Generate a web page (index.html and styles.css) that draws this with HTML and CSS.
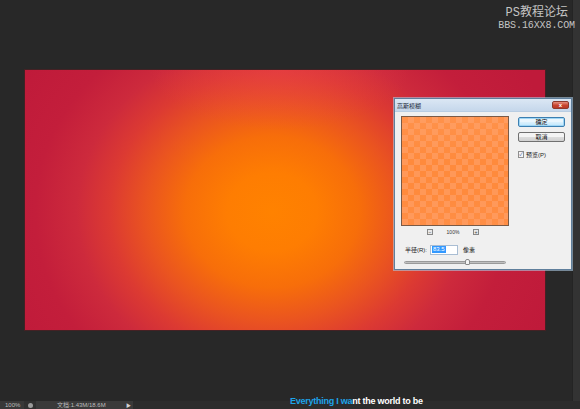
FILE: index.html
```html
<!DOCTYPE html>
<html lang="zh">
<head>
<meta charset="utf-8">
<title>高斯模糊</title>
<link rel="stylesheet" href="styles.css">
</head>
<body>
<div class="app">
  <div class="workspace">
    <div class="doc-area">
      <div class="canvas"></div>
    </div>
    <div class="side-strip"></div>
  </div>
  <div class="statusbar">
    <span class="seg zoom-pct">100%</span>
    <span class="seg seg-icon"><span class="disc"></span></span>
    <span class="seg doc-info">文档:1.43M/18.6M</span>
    <span class="seg seg-arrow">&#9654;</span>
  </div>

  <div class="watermark">
    <div class="wm-line1">PS教程论坛</div>
    <div class="wm-line2">BBS.16XX8.COM</div>
  </div>

  <div class="dialog">
    <div class="titlebar">
      <span class="title">高斯模糊</span>
      <span class="close">x</span>
    </div>
    <div class="dlg-body">
      <div class="left-col">
        <div class="preview"></div>
        <div class="zoom-row">
          <span class="zbtn">−</span>
          <span class="zpct">100%</span>
          <span class="zbtn">+</span>
        </div>
        <div class="radius-row">
          <span class="lbl">半径(R):</span>
          <span class="input"><span class="sel">83.5</span></span>
          <span class="lbl">像素</span>
        </div>
        <div class="slider">
          <span class="thumb"></span>
        </div>
      </div>
      <div class="right-col">
        <div class="btn btn-default">确定</div>
        <div class="btn">取消</div>
        <div class="check-row">
          <span class="checkbox">✓</span>
          <span class="lbl">预览(P)</span>
        </div>
      </div>
    </div>
  </div>

  <div class="lyric"><span class="sung">Everything I wa</span>nt the world to be</div>
</div>
</body>
</html>
```
FILE: styles.css
```css
* { box-sizing: border-box; }
html, body { margin: 0; padding: 0; }
body {
  background: #282828;
  font-family: "Liberation Sans", "Noto Sans CJK SC", sans-serif;
}
.app {
  position: relative;
  width: 580px;
  height: 409px;
  overflow: hidden;
  display: flex;
  flex-direction: column;
  background: #282828;
}
.workspace {
  height: 401px;
  display: flex;
}
.doc-area {
  width: 572px;
  padding: 70px 0 0 25px;
}
.canvas {
  width: 520px;
  height: 260px;
  background:
    radial-gradient(ellipse 130px 60px at 255px 0, rgba(238, 66, 80, 0.45), rgba(238, 66, 80, 0) 100%),
    radial-gradient(ellipse 300px 260px at 247px 142px,
      #ff8200 0%,
      #fe7d02 15%,
      #f76e0a 29%,
      #ea5420 42%,
      #dc3a32 54%,
      #cd2a3c 65%,
      #c31e3b 79%,
      #bf1a3a 100%);
  box-shadow: 0 0 0 1px rgba(120, 20, 30, 0.35);
}
.side-strip {
  width: 8px;
  background: #333333;
  border-left: 1px solid #242424;
}
.statusbar {
  height: 8px;
  display: flex;
  align-items: stretch;
  background: #2c2c2c;
  font-size: 6px;
  color: #bdbdbd;
  line-height: 8px;
}
.seg { display: flex; align-items: center; }
.zoom-pct { width: 24px; padding-left: 5px; background: #383838; }
.seg-icon { width: 12px; justify-content: center; background: #303030; }
.disc {
  width: 5px; height: 5px; border-radius: 50%;
  background: #9a9a9a;
}
.doc-info { width: 88px; padding-left: 21px; background: #3a3a3a; }
.seg-arrow { width: 9px; justify-content: center; background: #3a3a3a; font-size: 5px; color: #d0d0d0; }

.watermark {
  position: absolute;
  right: 5px;
  top: 7px;
  text-align: right;
  font-family: "Liberation Mono", "Noto Sans CJK SC", monospace;
  color: #c4c4c4;
}
.wm-line1 { font-size: 12px; line-height: 13px; padding-right: 7px; }
.wm-line2 { font-size: 10px; line-height: 11px; letter-spacing: -0.1px; }

.dialog {
  position: absolute;
  left: 394px;
  top: 98px;
  width: 178px;
  height: 172px;
  background: #f0f0f0;
  border: 1px solid #5f7f9c;
  box-shadow: 0 0 0 1px rgba(170, 200, 225, 0.6);
  display: flex;
  flex-direction: column;
}
.titlebar {
  height: 13px;
  display: flex;
  align-items: center;
  justify-content: space-between;
  padding: 0 2px 0 2px;
  background: linear-gradient(#dbe7f4, #c5d7eb);
  border-bottom: 1px solid #b9cde2;
}
.title { font-size: 6px; color: #1e2d3d; }
.close {
  width: 17px;
  height: 8px;
  border-radius: 2px;
  background: linear-gradient(#e6907f, #c8452f 55%, #b93a27);
  border: 1px solid #8d3a2c;
  color: #fff;
  font-size: 6px;
  line-height: 6px;
  text-align: center;
  font-weight: bold;
}
.dlg-body {
  flex: 1;
  display: flex;
  padding: 4px 0 0 6px;
  gap: 9px;
}
.left-col { width: 108px; display: flex; flex-direction: column; }
.preview {
  width: 108px;
  height: 110px;
  border: 1px solid #7a5a46;
  background:
    linear-gradient(rgba(255, 170, 120, 0.25), rgba(255, 140, 60, 0) 40%, rgba(255, 120, 40, 0) 70%, rgba(255, 160, 110, 0.2)),
    repeating-conic-gradient(#ff9858 0 25%, #ff8a3c 0 50%) 0 0 / 12px 12px;
}
.zoom-row {
  margin-top: 3px;
  height: 6px;
  display: flex;
  align-items: center;
  padding-left: 26px;
  gap: 12px;
  font-size: 5px;
  color: #333;
}
.zbtn {
  width: 6px; height: 6px;
  border: 1px solid #888;
  background: #e8e8e8;
  font-size: 5px;
  line-height: 4px;
  text-align: center;
  color: #444;
}
.zpct { width: 16px; text-align: center; }
.radius-row {
  margin-top: 9px;
  height: 11px;
  display: flex;
  align-items: center;
  padding-left: 4px;
  gap: 3px;
  font-size: 6px;
  color: #222;
}
.input {
  width: 28px;
  height: 10px;
  background: #fff;
  border: 1px solid #a9bdd3;
  display: flex;
  align-items: center;
  padding-left: 1px;
  margin-right: 2px;
}
.sel { background: #3399ff; color: #fff; font-size: 6px; line-height: 7px; padding: 0 1px; }
.slider {
  position: relative;
  margin: 6px 0 0 3px;
  width: 102px;
  height: 3px;
  border-radius: 2px;
  background: linear-gradient(#a8a8a8, #d8d8d8);
  border: 1px solid #9a9a9a;
}
.thumb {
  position: absolute;
  left: 60px;
  top: -3px;
  width: 5px;
  height: 6px;
  background: #f4f4f4;
  border: 1px solid #8a8a8a;
  border-radius: 2px 2px 1px 1px;
}
.right-col {
  width: 47px;
  padding-top: 1px;
  display: flex;
  flex-direction: column;
  gap: 5px;
}
.btn {
  height: 10px;
  border: 1px solid #707070;
  border-radius: 2px;
  background: linear-gradient(#f4f4f4 45%, #dcdcdc 55%, #d0d0d0);
  font-size: 6px;
  line-height: 8px;
  text-align: center;
  color: #111;
}
.btn-default {
  border-color: #3c7fb1;
  box-shadow: inset 0 0 0 1px #9fd6f5;
  background: linear-gradient(#eaf6fd 45%, #d9f0fc 55%, #bee6fd);
}
.check-row {
  margin-top: 3px;
  display: flex;
  align-items: center;
  gap: 2px;
  font-size: 6px;
  color: #222;
}
.checkbox {
  width: 6px;
  height: 7px;
  border: 1px solid #8f8f8f;
  background: #f6f6f6;
  font-size: 5px;
  line-height: 5px;
  color: #1f3f8f;
  text-align: center;
}

.lyric {
  position: absolute;
  left: 290px;
  top: 396px;
  font-family: "Liberation Sans", sans-serif;
  font-weight: bold;
  font-size: 9px;
  line-height: 11px;
  letter-spacing: -0.25px;
  color: #ffffff;
  white-space: nowrap;
}
.sung { color: #1ea4ea; }
```
